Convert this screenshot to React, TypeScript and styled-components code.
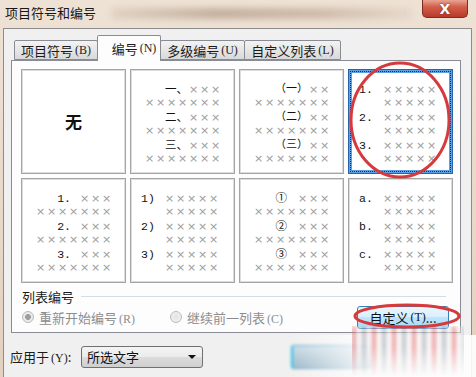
import React from "react";
import styled, { createGlobalStyle } from "styled-components";

const Global = createGlobalStyle`
  html, body { margin: 0; padding: 0; background: #e8d8c6; }
  body { font-family: "Noto Sans CJK SC", "Noto Sans", sans-serif; }
  * { box-sizing: border-box; }
`;

const Window = styled.div`
  position: relative;
  width: 476px;
  height: 377px;
  overflow: hidden;
  background: linear-gradient(180deg, #eee2d5 0%, #e3d1bf 100%);
  display: flex;
  flex-direction: column;
`;

const TitleBar = styled.div`
  height: 28px;
  flex: none;
  display: flex;
  align-items: flex-start;
  padding: 0 8px 0 5px;
`;

const Title = styled.div`
  font-size: 13px;
  line-height: 26px;
  color: #161616;
  white-space: nowrap;
`;

const TitleSmear = styled.div`
  flex: 1;
  height: 11px;
  margin: 8px 10px 0 16px;
  filter: blur(3px);
  background: linear-gradient(
    90deg,
    rgba(160, 120, 90, 0.15),
    rgba(120, 85, 60, 0.35) 35%,
    rgba(140, 100, 75, 0.3) 70%,
    rgba(160, 120, 90, 0.08)
  );
`;

const CloseBtn = styled.div`
  width: 46px;
  height: 18px;
  flex: none;
  border-radius: 0 0 5px 5px;
  border: 1px solid #7c2c22;
  border-top: none;
  background: linear-gradient(180deg, #e9a393 0%, #d2604b 40%, #b8382a 100%);
  color: #fff;
  font: bold 14px "DejaVu Sans", sans-serif;
  text-shadow: 0 0 2px #6a1a10;
  display: flex;
  align-items: center;
  justify-content: center;
`;

const Body = styled.div`
  flex: 1;
  margin: 0 4px 0 3px;
  background: #f0f0f0;
  border: 1px solid #8c8c8c;
  border-bottom: none;
  display: flex;
  flex-direction: column;
  padding: 6px 10px 0 7px;
`;

const TabStrip = styled.div`
  height: 25px;
  display: flex;
  align-items: flex-end;
  padding-left: 3px;
`;

const Tab = styled.div<{ $w: number; $active?: boolean }>`
  position: relative;
  z-index: ${(p) => (p.$active ? 2 : 1)};
  width: ${(p) => p.$w}px;
  height: ${(p) => (p.$active ? 26 : 20)}px;
  margin-bottom: ${(p) => (p.$active ? -1 : 0)}px;
  & + & { margin-left: -1px; }
  border: 1px solid #898c95;
  border-bottom: ${(p) => (p.$active ? "none" : "1px solid #898c95")};
  border-radius: 2px 2px 0 0;
  background: ${(p) =>
    p.$active ? "#fdfdfd" : "linear-gradient(180deg, #f3f3f3 0%, #e6e6e6 50%, #d9d9d9 100%)"};
  display: flex;
  align-items: center;
  justify-content: center;
  padding-left: ${(p) => (p.$active ? 10 : 0)}px;
  font-size: 13px;
  color: #1b1b1b;
  white-space: nowrap;
`;

const Mn = styled.span`
  font-family: "Liberation Serif", serif;
  font-size: 12px;
  margin-left: 2px;
`;

const Panel = styled.div`
  width: 450px;
  height: 273px;
  border: 1px solid #898c95;
  background: #fdfdfd;
  padding: 8px 0 0 9px;
  display: flex;
  flex-direction: column;
`;

const Grid = styled.div`
  display: grid;
  grid-template-columns: repeat(4, 105px);
  grid-template-rows: repeat(2, 105px);
  gap: 4px;
`;

const Cell = styled.div<{ $selected?: boolean; $align?: "left" | "right" | "center" }>`
  background: #ffffff;
  border: 1px solid ${(p) => (p.$selected ? "#2a64a8" : "#a5a5a5")};
  box-shadow: ${(p) =>
    p.$selected ? "inset 0 0 0 3px #5c9fe2" : "inset 0 0 0 1px #dcdcdc"};
  outline: ${(p) => (p.$selected ? "1px dotted #10305a" : "none")};
  outline-offset: -3px;
  display: flex;
  flex-direction: column;
  gap: 2px;
  justify-content: ${(p) => (p.$align === "center" ? "center" : "flex-start")};
  align-items: ${(p) =>
    p.$align === "center" ? "center" : p.$align === "right" ? "flex-end" : "flex-start"};
  padding: ${(p) => (p.$align === "center" ? "0" : p.$align === "right" ? "13px 13px 0 0" : "13px 0 0 10px")};
`;

const NoneText = styled.div`
  font-size: 17px;
  font-weight: bold;
  color: #111;
`;

const Group = styled.div<{ $align: "left" | "right" }>`
  display: flex;
  flex-direction: column;
  align-items: ${(p) => (p.$align === "right" ? "flex-end" : "flex-start")};
`;

const Line = styled.div<{ $indent?: number }>`
  height: 13px;
  display: flex;
  align-items: center;
  padding-left: ${(p) => p.$indent || 0}px;
`;

const Num = styled.span<{ $w?: number; $gap?: number; $size?: number }>`
  font-family: "Liberation Mono", "Noto Sans CJK SC", monospace;
  font-size: ${(p) => p.$size || 11.5}px;
  line-height: 13px;
  color: #111;
  width: ${(p) => (p.$w ? `${p.$w}px` : "auto")};
  margin-right: ${(p) => p.$gap || 0}px;
  white-space: nowrap;
`;

const XRun = styled.span`
  display: flex;
`;

const XMark = styled.span`
  width: 11px;
  text-align: center;
  font: 11px "DejaVu Sans", sans-serif;
  line-height: 13px;
  color: #9c9c9c;
`;

const Xs = ({ n }: { n: number }) => (
  <XRun>
    {Array.from({ length: n }, (_, i) => (
      <XMark key={i}>×</XMark>
    ))}
  </XRun>
);

const GroupHead = styled.div`
  height: 17px;
  margin-top: 5px;
  margin-left: 1px;
  display: flex;
  align-items: center;
`;

const GroupLabel = styled.span`
  font-size: 13px;
  color: #1b1b1b;
`;

const GroupLine = styled.div`
  flex: 1;
  height: 1px;
  background: #d5dde3;
  margin: 0 14px 0 7px;
`;

const RadioRow = styled.div`
  height: 24px;
  display: flex;
  align-items: center;
  margin-left: 1px;
`;

const RadioItem = styled.div<{ $w?: number }>`
  display: flex;
  align-items: center;
  gap: 5px;
  width: ${(p) => (p.$w ? `${p.$w}px` : "auto")};
  flex: ${(p) => (p.$w ? "none" : "1")};
  font-size: 13px;
  color: #8d8d8d;
  white-space: nowrap;
`;

const Radio = styled.span<{ $checked?: boolean }>`
  width: 12px;
  height: 12px;
  border-radius: 50%;
  border: 1px solid #b9b9b9;
  background: ${(p) =>
    p.$checked
      ? "radial-gradient(circle, #9d9d9d 0 2.6px, #eaeaea 3.2px)"
      : "radial-gradient(circle, #e2e2e2 0, #f2f2f2 6px)"};
`;

const CustomBtn = styled.div`
  width: 92px;
  height: 23px;
  margin-right: 11px;
  border: 1px solid #3c7fb1;
  border-radius: 3px;
  background: linear-gradient(180deg, #eaf6fd 0%, #d9f0fc 45%, #bee6fd 50%, #a7d9f5 100%);
  font-size: 13px;
  color: #111;
  display: flex;
  align-items: center;
  justify-content: center;
  white-space: nowrap;
`;

const BottomRow = styled.div`
  height: 44px;
  display: flex;
  align-items: center;
  padding-top: 3px;
  margin-left: -1px;
`;

const ApplyLabel = styled.span`
  font-size: 13px;
  color: #1b1b1b;
  width: 71px;
  white-space: nowrap;
`;

const Select = styled.div`
  width: 122px;
  height: 22px;
  border: 1px solid #707070;
  border-radius: 3px;
  background: linear-gradient(180deg, #f4f4f4 0%, #ebebeb 50%, #dcdcdc 51%, #cfcfcf 100%);
  display: flex;
  align-items: center;
  justify-content: space-between;
  padding: 0 6px 0 5px;
  font-size: 13px;
  color: #111;
`;

const Caret = styled.span`
  width: 0;
  height: 0;
  border-left: 4px solid transparent;
  border-right: 4px solid transparent;
  border-top: 4px solid #111;
`;

const OkBtn = styled.div`
  margin-left: 88px;
  width: 80px;
  height: 24px;
  border: 1px solid #5a9fc5;
  border-left: 2px solid #2ac0e8;
  border-radius: 3px;
  background: linear-gradient(180deg, #c9dbe6 0%, #9fb9c8 100%);
  filter: blur(1.5px);
`;

const Fade = styled.div`
  position: absolute;
  left: 292px;
  top: 335px;
  width: 184px;
  height: 42px;
  background: linear-gradient(90deg, rgba(255, 255, 255, 0) 0%, rgba(255, 255, 255, 0.75) 35%, rgba(255, 255, 255, 0.9) 100%);
  pointer-events: none;
`;

const Streaks = styled.div`
  position: absolute;
  left: 352px;
  top: 326px;
  width: 112px;
  height: 51px;
  background: repeating-linear-gradient(
    90deg,
    rgba(215, 70, 70, 0.55) 0 4px,
    rgba(255, 255, 255, 0.5) 4px 10px,
    rgba(120, 125, 140, 0.5) 10px 14px,
    rgba(255, 255, 255, 0.6) 14px 20px
  );
  filter: blur(2px);
  -webkit-mask-image: linear-gradient(180deg, #000 0%, #000 40%, transparent 100%);
  mask-image: linear-gradient(180deg, #000 0%, #000 40%, transparent 100%);
  pointer-events: none;
`;

const Marks = styled.svg`
  position: absolute;
  left: 0;
  top: 0;
  pointer-events: none;
`;

const RightCell = ({ rows, numSize, gap }: { rows: [string, number][]; numSize?: number; gap?: number }) => (
  <Cell $align="right">
    {rows.map(([n, head]) => (
      <Group $align="right" key={n}>
        <Line>
          <Num $size={numSize} $gap={gap}>{n}</Num>
          <Xs n={head} />
        </Line>
        <Line>
          <Xs n={7} />
        </Line>
      </Group>
    ))}
  </Cell>
);

const LeftCell = ({ nums, selected }: { nums: string[]; selected?: boolean }) => (
  <Cell $align="left" $selected={selected}>
    {nums.map((n) => (
      <Group $align="left" key={n}>
        <Line>
          <Num $w={23}>{n}</Num>
          <Xs n={5} />
        </Line>
        <Line $indent={23}>
          <Xs n={5} />
        </Line>
      </Group>
    ))}
  </Cell>
);

export default function App() {
  return (
    <Window>
      <Global />
      <TitleBar>
        <Title>项目符号和编号</Title>
        <TitleSmear />
        <CloseBtn>X</CloseBtn>
      </TitleBar>
      <Body>
        <TabStrip>
          <Tab $w={84}>
            项目符号<Mn>(B)</Mn>
          </Tab>
          <Tab $w={64} $active>
            编号<Mn>(N)</Mn>
          </Tab>
          <Tab $w={85}>
            多级编号<Mn>(U)</Mn>
          </Tab>
          <Tab $w={97}>
            自定义列表<Mn>(L)</Mn>
          </Tab>
        </TabStrip>
        <Panel>
          <Grid>
            <Cell $align="center">
              <NoneText>无</NoneText>
            </Cell>
            <RightCell rows={[["一、", 3], ["二、", 3], ["三、", 3]]} />
            <RightCell rows={[["（一）", 2], ["（二）", 2], ["（三）", 2]]} numSize={11} />
            <LeftCell nums={["1.", "2.", "3."]} selected />
            <RightCell rows={[["1.", 3], ["2.", 3], ["3.", 3]]} gap={8} />
            <LeftCell nums={["1)", "2)", "3)"]} />
            <RightCell rows={[["①", 3], ["②", 3], ["③", 3]]} gap={10} />
            <LeftCell nums={["a.", "b.", "c."]} />
          </Grid>
          <GroupHead>
            <GroupLabel>列表编号</GroupLabel>
            <GroupLine />
          </GroupHead>
          <RadioRow>
            <RadioItem $w={148}>
              <Radio $checked />
              <span>
                重新开始编号<Mn>(R)</Mn>
              </span>
            </RadioItem>
            <RadioItem>
              <Radio />
              <span>
                继续前一列表<Mn>(C)</Mn>
              </span>
            </RadioItem>
            <CustomBtn>
              自定义<Mn>(T)</Mn>...
            </CustomBtn>
          </RadioRow>
        </Panel>
        <BottomRow>
          <ApplyLabel>
            应用于<Mn>(Y)</Mn>:
          </ApplyLabel>
          <Select>
            <span>所选文字</span>
            <Caret />
          </Select>
          <OkBtn />
        </BottomRow>
      </Body>
      <Fade />
      <Streaks />
      <Marks width={476} height={377} viewBox="0 0 476 377">
        <ellipse cx={400} cy={120} rx={49} ry={57} fill="none" stroke="#d63a3c" strokeWidth={3} />
        <ellipse cx={407} cy={316} rx={52} ry={11} fill="none" stroke="#d63a3c" strokeWidth={3} />
      </Marks>
    </Window>
  );
}
